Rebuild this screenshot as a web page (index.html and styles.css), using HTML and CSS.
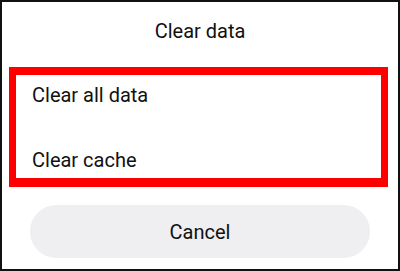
FILE: index.html
```html
<!DOCTYPE html>
<html>
<head>
<meta charset="utf-8">
<link rel="stylesheet" href="styles.css">
</head>
<body>
<div class="frame">
  <div class="title">Clear data</div>
  <div class="options">
    <div class="option">Clear all data</div>
    <div class="option">Clear cache</div>
  </div>
  <div class="cancel">Cancel</div>
</div>
</body>
</html>
```
FILE: styles.css
```css
html, body {
  margin: 0;
  padding: 0;
  background: #ffffff;
}
.frame {
  box-sizing: border-box;
  width: 400px;
  height: 271px;
  border: 2px solid #111111;
  background: #ffffff;
  font-family: Roboto, "Noto Sans", sans-serif;
  font-size: 20px;
  line-height: 24px;
  color: #111111;
  display: flex;
  flex-direction: column;
}
.title {
  padding-top: 17px;
  text-align: center;
}
.options {
  margin: 24px 0 0 7px;
  width: 379px;
  box-sizing: border-box;
  border-style: solid;
  border-color: #fe0000;
  border-width: 8px 7px 9px 7px;
  padding: 8px 16px 6px 16px;
  display: flex;
  flex-direction: column;
  gap: 41px;
}
.cancel {
  margin: 18px 0 0 28px;
  width: 340px;
  height: 53px;
  border-radius: 27px;
  background: #efeef0;
  display: flex;
  align-items: center;
  justify-content: center;
}
```
